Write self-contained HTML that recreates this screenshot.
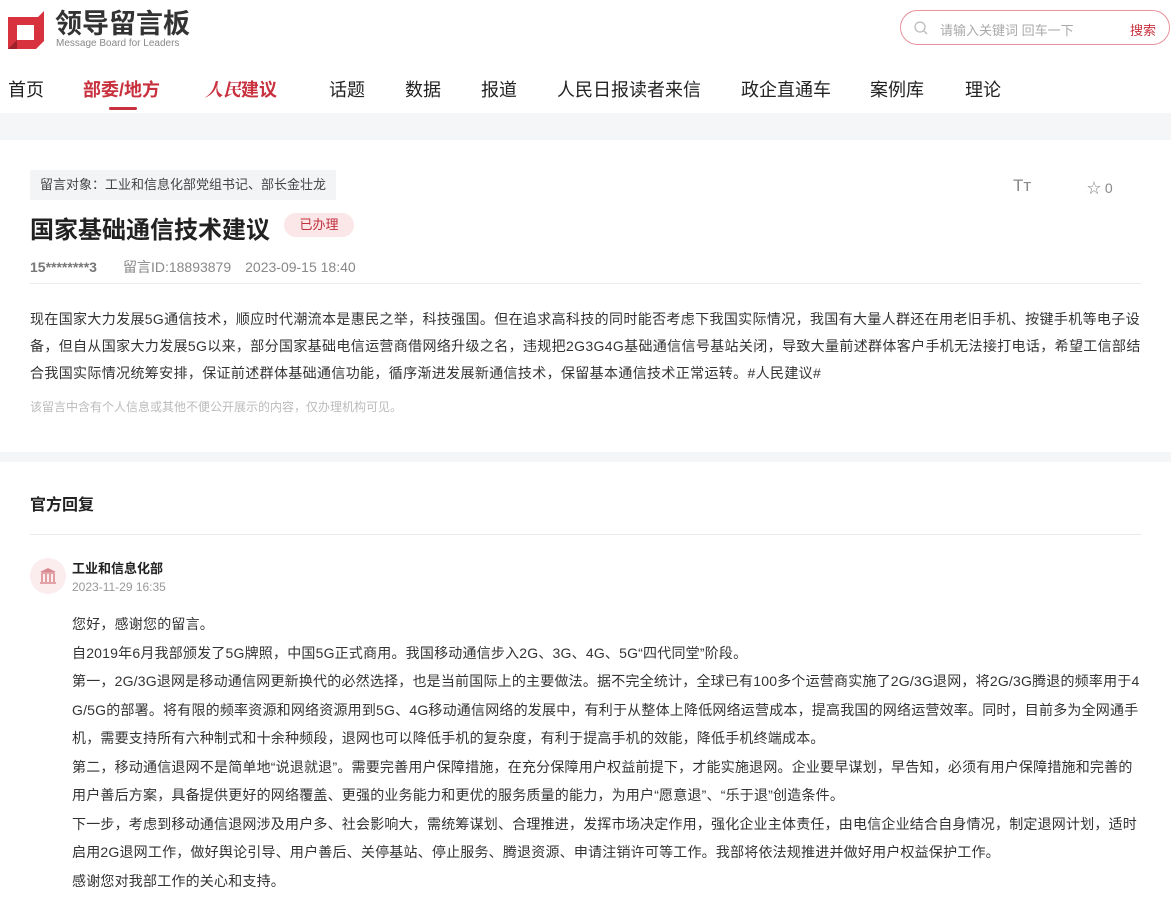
<!DOCTYPE html>
<html><head><meta charset="utf-8"><style>
*{margin:0;padding:0;box-sizing:border-box}
body{width:1171px;height:898px;overflow:hidden;background:#f5f6f8;font-family:"Liberation Sans","Noto Sans CJK SC",sans-serif;color:#333}
.hdr{background:#fff;height:113px;position:relative}
.logo{position:absolute;left:8px;top:10px}
.nav{position:absolute;top:76px;left:8px;font-size:18px;color:#222}
.nav span{position:absolute;white-space:nowrap}
.search{position:absolute;left:900px;top:10px;width:270px;height:35px;border:1px solid #e8919b;border-radius:18px}
.card{background:#fff;position:absolute;left:0;width:1171px}
.tag{position:absolute;left:30px;top:30px;background:#f3f4f6;height:30px;line-height:30px;padding:0 10px;font-size:13px;color:#444}
h1{position:absolute;left:30px;top:70px;font-size:24px;font-weight:bold;color:#222}
.badge{position:absolute;left:284px;top:73px;width:70px;height:24px;border-radius:12px;background:#fbe6e8;color:#c0303d;font-size:13px;line-height:24px;text-align:center}
.meta{position:absolute;left:30px;top:117px;font-size:14px;color:#888}
.line{position:absolute;left:30px;right:30px;height:1px;background:#ebebeb}
.txt{position:absolute;left:30px;width:1112px;font-size:14px;line-height:27px;color:#333;letter-spacing:0.35px;word-break:break-all}
.rep{position:absolute;left:72px;width:1070px;font-size:14px;line-height:28.5px;color:#333;word-break:break-all;letter-spacing:0.2px}
</style></head><body>
<div class="hdr">
 <div class="logo">
  <svg width="40" height="38" viewBox="0 0 40 38" style="position:absolute;left:0;top:1px"><path d="M0 6h30l6-6v30l-8 8H0zM9 14v15h17V14z" fill="#d7323e" fill-rule="evenodd"/><path d="M0 38l9-9v9z" fill="#a0202a"/></svg>
  <div style="position:absolute;left:47px;top:-2px;font-size:27px;font-weight:bold;color:#333;white-space:nowrap;line-height:32px">领导留言板</div>
  <div style="position:absolute;left:48px;top:28px;font-size:10px;color:#888;white-space:nowrap">Message Board for Leaders</div>
 </div>
 <div class="nav">
  <span style="left:0">首页</span>
  <span style="left:75px;color:#c8303d;font-weight:bold">部委/地方</span>
  <span style="left:197px;color:#c8303d;font-weight:bold;font-style:italic;font-family:'Noto Serif CJK SC',serif">人民<span style="position:static;font-style:normal;font-family:'Liberation Sans','Noto Sans CJK SC',sans-serif">建议</span></span>
  <span style="left:321px">话题</span>
  <span style="left:397px">数据</span>
  <span style="left:473px">报道</span>
  <span style="left:549px">人民日报读者来信</span>
  <span style="left:733px">政企直通车</span>
  <span style="left:862px">案例库</span>
  <span style="left:957px">理论</span>
 </div>
 <div style="position:absolute;left:109px;top:107px;width:28px;height:3px;background:#c8303d;border-radius:2px"></div>
 <div class="search">
  <svg width="14" height="14" viewBox="0 0 14 14" style="position:absolute;left:13px;top:10px"><circle cx="6" cy="6" r="5" fill="none" stroke="#bbb" stroke-width="1.3"/><path d="M10 10l3 3" stroke="#bbb" stroke-width="1.3"/></svg>
  <span style="position:absolute;left:39px;top:9px;font-size:13px;color:#aaa">请输入关键词 回车一下</span>
  <span style="position:absolute;left:229px;top:9px;font-size:13px;color:#c8303d">搜索</span>
 </div>
</div>
<div class="card" style="top:140px;height:312px">
 <div class="tag">留言对象：工业和信息化部党组书记、部长金壮龙</div>
 <div style="position:absolute;left:1013px;top:36px;font-size:17px;color:#888">Tт</div>
 <div style="position:absolute;left:1087px;top:38px;font-size:14px;color:#888">☆ 0</div>
 <h1>国家基础通信技术建议</h1>
 <div class="badge">已办理</div>
 <div class="meta"><b style="color:#777">15********3</b><span style="margin-left:26px">留言ID:18893879</span><span style="margin-left:14px">2023-09-15 18:40</span></div>
 <div class="line" style="top:143px"></div>
 <div class="txt" style="top:166px">现在国家大力发展5G通信技术，顺应时代潮流本是惠民之举，科技强国。但在追求高科技的同时能否考虑下我国实际情况，我国有大量人群还在用老旧手机、按键手机等电子设备，但自从国家大力发展5G以来，部分国家基础电信运营商借网络升级之名，违规把2G3G4G基础通信信号基站关闭，导致大量前述群体客户手机无法接打电话，希望工信部结合我国实际情况统筹安排，保证前述群体基础通信功能，循序渐进发展新通信技术，保留基本通信技术正常运转。#人民建议#</div>
 <div style="position:absolute;left:30px;top:258px;font-size:12px;color:#bbb">该留言中含有个人信息或其他不便公开展示的内容，仅办理机构可见。</div>
</div>
<div class="card" style="top:462px;height:436px">
 <div style="position:absolute;left:30px;top:29px;font-size:16px;font-weight:bold;color:#222">官方回复</div>
 <div class="line" style="top:72px"></div>
 <div style="position:absolute;left:30px;top:96px;width:36px;height:36px;border-radius:50%;background:#fbeced">
  <svg width="20" height="20" viewBox="0 0 20 20" style="position:absolute;left:8px;top:8px"><path d="M10 2L2 6h16z" fill="#d98a90"/><path d="M3 7h14M4 8v8M8 8v8M12 8v8M16 8v8M2 17h16" stroke="#d98a90" stroke-width="1.6" fill="none"/></svg>
 </div>
 <div style="position:absolute;left:72px;top:96px;font-size:13px;font-weight:bold;color:#222">工业和信息化部</div>
 <div style="position:absolute;left:72px;top:118px;font-size:12px;color:#999">2023-11-29 16:35</div>
 <div class="rep" style="top:148px">您好，感谢您的留言。<br>自2019年6月我部颁发了5G牌照，中国5G正式商用。我国移动通信步入2G、3G、4G、5G“四代同堂”阶段。<br>第一，2G/3G退网是移动通信网更新换代的必然选择，也是当前国际上的主要做法。据不完全统计，全球已有100多个运营商实施了2G/3G退网，将2G/3G腾退的频率用于4G/5G的部署。将有限的频率资源和网络资源用到5G、4G移动通信网络的发展中，有利于从整体上降低网络运营成本，提高我国的网络运营效率。同时，目前多为全网通手机，需要支持所有六种制式和十余种频段，退网也可以降低手机的复杂度，有利于提高手机的效能，降低手机终端成本。<br>第二，移动通信退网不是简单地“说退就退”。需要完善用户保障措施，在充分保障用户权益前提下，才能实施退网。企业要早谋划，早告知，必须有用户保障措施和完善的用户善后方案，具备提供更好的网络覆盖、更强的业务能力和更优的服务质量的能力，为用户“愿意退”、“乐于退”创造条件。<br>下一步，考虑到移动通信退网涉及用户多、社会影响大，需统筹谋划、合理推进，发挥市场决定作用，强化企业主体责任，由电信企业结合自身情况，制定退网计划，适时启用2G退网工作，做好舆论引导、用户善后、关停基站、停止服务、腾退资源、申请注销许可等工作。我部将依法规推进并做好用户权益保护工作。<br>感谢您对我部工作的关心和支持。</div>
</div>
</body></html>
